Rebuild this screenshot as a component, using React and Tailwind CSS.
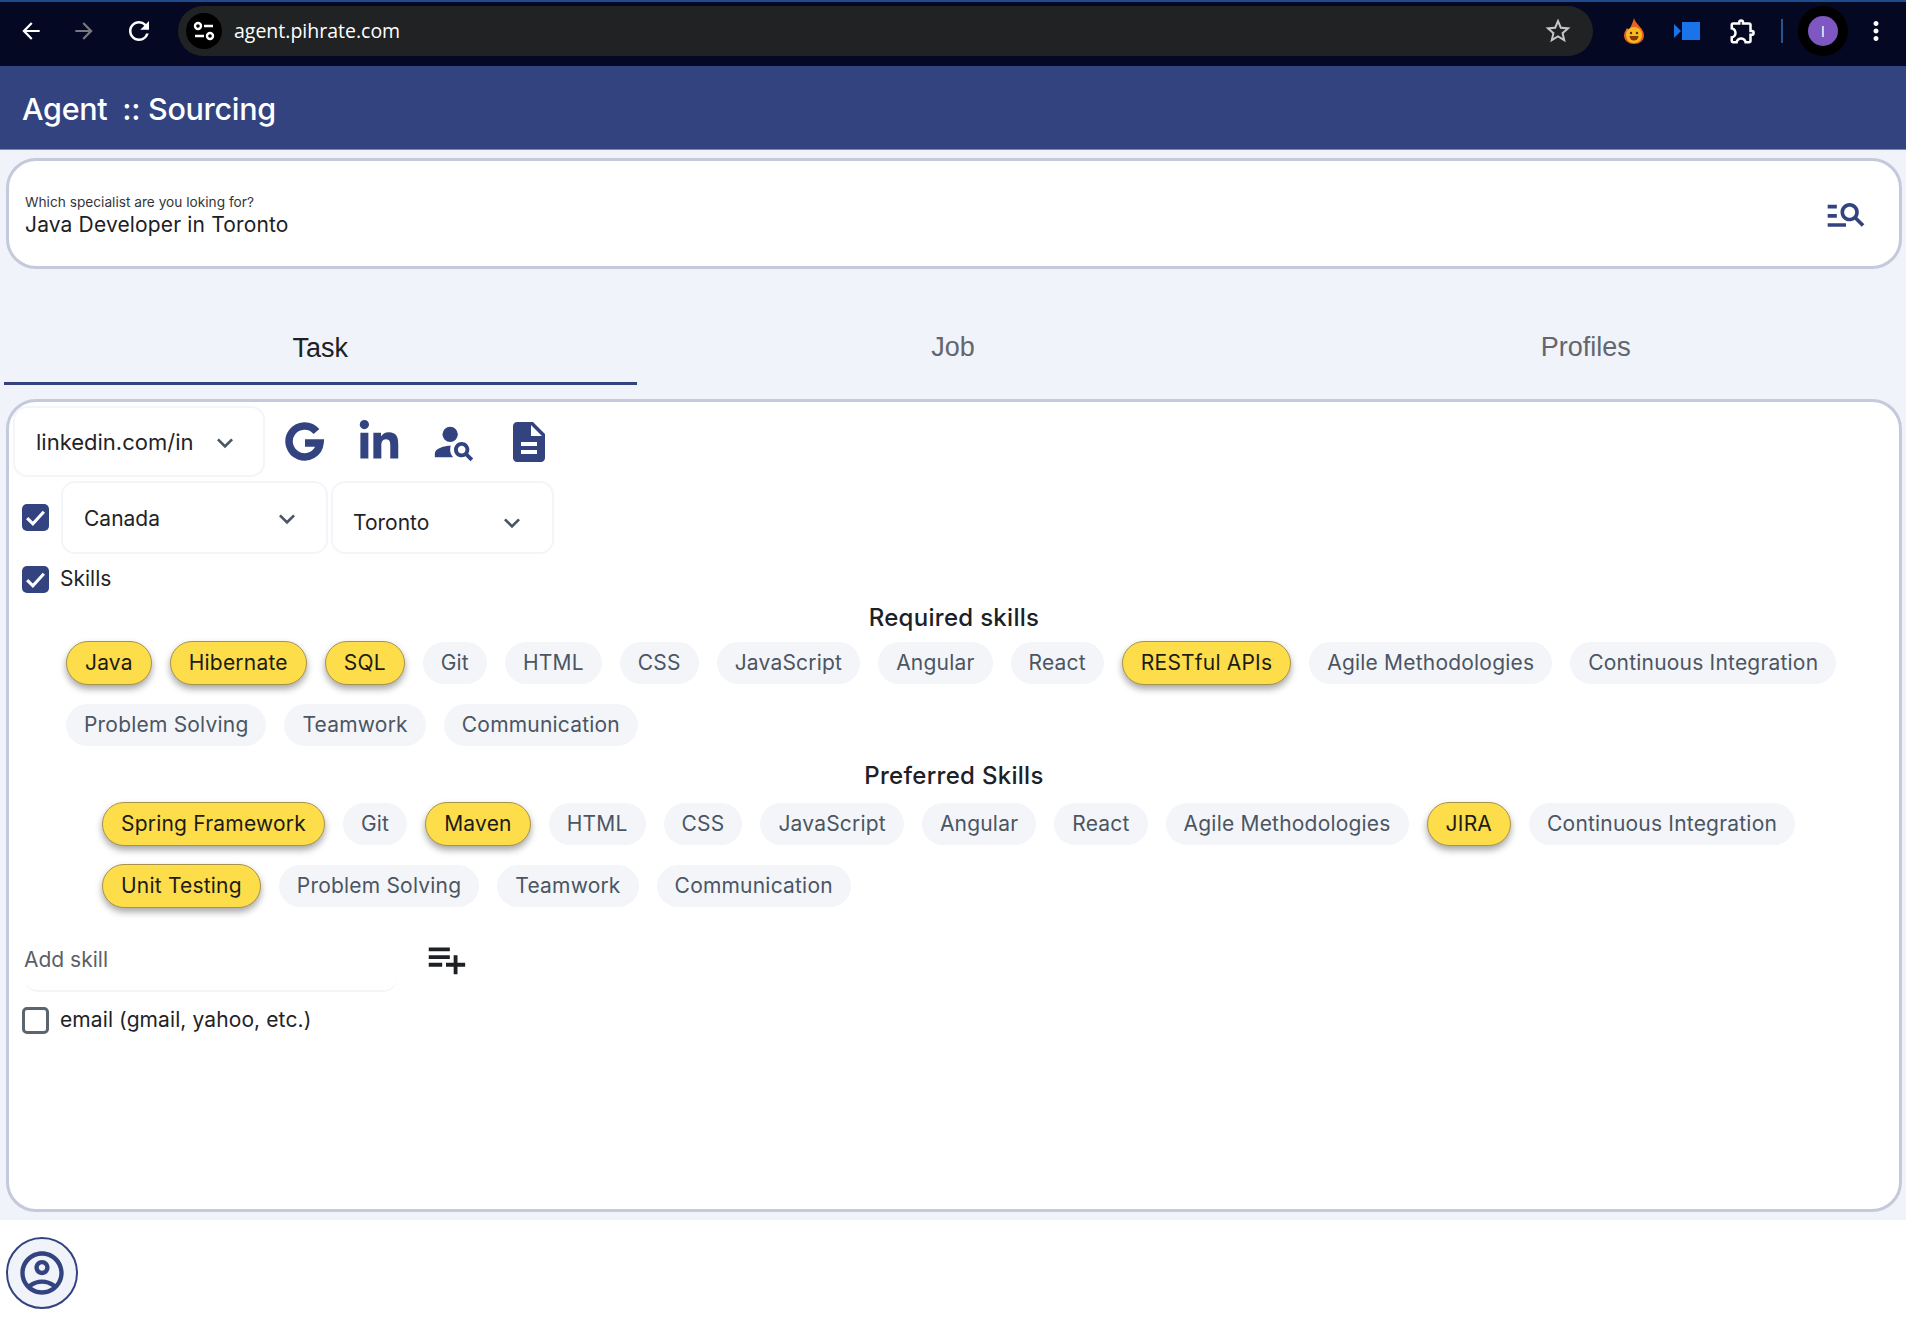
import React from "react";
import { FaLinkedinIn } from "react-icons/fa";
import {
  MdArrowBack,
  MdArrowForward,
  MdRefresh,
  MdStarBorder,
  MdOutlineExtension,
  MdManageSearch,
  MdPersonSearch,
  MdDescription,
  MdPlaylistAdd,
  MdOutlineAccountCircle,
  MdKeyboardArrowDown,
  MdMoreVert,
} from "react-icons/md";

const required = [
  ["Java", true], ["Hibernate", true], ["SQL", true], ["Git"], ["HTML"], ["CSS"], ["JavaScript"], ["Angular"], ["React"],
  ["RESTful APIs", true], ["Agile Methodologies"], ["Continuous Integration"], ["Problem Solving"], ["Teamwork"], ["Communication"],
];

const preferred = [
  ["Spring Framework", true], ["Git"], ["Maven", true], ["HTML"], ["CSS"], ["JavaScript"], ["Angular"], ["React"],
  ["Agile Methodologies"], ["JIRA", true], ["Continuous Integration"], ["Unit Testing", true], ["Problem Solving"], ["Teamwork"], ["Communication"],
];

function Chip({ label, active }) {
  return (
    <span
      className={
        active
          ? "h-[44px] px-[18px] flex items-center rounded-full bg-[#fedd4a] border border-[#a8934a] text-[#1d1b16] text-[21px] tracking-[0.2px] shadow-[0_4px_7px_rgba(0,0,0,0.35)]"
          : "h-[42px] my-px px-[18px] flex items-center rounded-full bg-[#f3f5f9] text-[#4b5563] text-[21px] tracking-[0.2px]"
      }
    >
      {label}
    </span>
  );
}

function Checkbox({ checked }) {
  return checked ? (
    <div className="ml-[9px] w-[27px] h-[27px] rounded-[5px] bg-[#334380] flex items-center justify-center">
      <svg width="25" height="25" viewBox="0 0 24 24" fill="none" stroke="#fff" strokeWidth="3">
        <path d="M4 12.5l5.5 5.5L20 6.5" />
      </svg>
    </div>
  ) : (
    <div className="ml-[9px] w-[27px] h-[27px] rounded-[5px] border-[3px] border-[#5b6570]" />
  );
}

function Select({ label, className }) {
  return (
    <div className={"flex items-center justify-between rounded-[14px] border-2 border-[#f3f5f9] " + className}>
      <span className="text-[#1f2328]">{label}</span>
      <MdKeyboardArrowDown className="text-[#4b5563]" size={32} />
    </div>
  );
}

function GoogleIcon() {
  return (
    <svg width="40" height="40" viewBox="0 0 40 40" fill="none" stroke="#334380" strokeWidth="7.5">
      <path d="M31.5 9.5A15.5 15.5 0 1 0 35 21H20" />
    </svg>
  );
}

function Flame() {
  return (
    <svg width="20" height="26" viewBox="0 0 20 26">
      <path d="M10 0c1 4 3 5 6 9 3 3 4 6 4 9a10 8 0 0 1-20 0c0-4 2-6 3-8 1 1 2 2 2 3 1-4 4-8 5-13z" fill="#e8641b" />
      <circle cx="10" cy="17" r="8" fill="#f7b924" />
      <circle cx="7" cy="15" r="1.2" fill="#5a3000" />
      <circle cx="13" cy="15" r="1.2" fill="#5a3000" />
      <path d="M5.5 18a4.5 4.5 0 0 0 9 0z" fill="#8a3a00" />
    </svg>
  );
}

function TuneIcon() {
  return (
    <svg width="22" height="20" viewBox="0 0 22 20" fill="none" stroke="#fff" strokeWidth="2.4">
      <circle cx="5" cy="5" r="3" />
      <path d="M11 5h9M2 15h9" />
      <circle cx="17" cy="15" r="3" />
    </svg>
  );
}

export default function App() {
  return (
    <div className="w-[1906px] h-[1323px] overflow-hidden bg-white font-['Inter',sans-serif]">
      {/* browser toolbar */}
      <div className="h-[66px] bg-[#050823] border-t-2 border-[#1f4a8c] flex items-center text-white">
        <div className="w-[178px] flex items-center pl-[18px] gap-[27px] -mt-[6px]">
          <MdArrowBack size={26} />
          <MdArrowForward size={26} className="text-[#77797f]" />
          <MdRefresh size={30} />
        </div>
        <div className="w-[1415px] h-[50px] -mt-[6px] rounded-full bg-[#202224] flex items-center pl-[8px] pr-[20px]">
          <div className="w-[36px] h-[36px] rounded-full bg-black flex items-center justify-center">
            <TuneIcon />
          </div>
          <span className="ml-[12px] text-[19.5px] font-['Open_Sans',sans-serif]">agent.pihrate.com</span>
          <MdStarBorder size={30} className="ml-auto text-[#c4c7c5]" />
        </div>
        <div className="flex-1 flex items-center -mt-[6px] pl-[31px]">
          <Flame />
          <svg width="26" height="18" viewBox="0 0 26 18" className="ml-[30px]">
            <path d="M0 2l7 7-7 7z" fill="#1a73e8" />
            <rect x="8" y="0" width="18" height="18" fill="#1a73e8" />
          </svg>
          <MdOutlineExtension size={30} className="ml-[28px]" />
          <div className="ml-[23px] w-[2px] h-[24px] bg-[#2a5490]" />
          <div className="ml-[15px] w-[50px] h-[50px] rounded-full bg-black flex items-center justify-center">
            <div className="w-[30px] h-[30px] rounded-full bg-[#7e57c2] flex items-center justify-center text-[14px]">I</div>
          </div>
          <MdMoreVert size={30} className="ml-[13px]" />
        </div>
      </div>

      {/* app header */}
      <div className="h-[84px] bg-[#334380] border-b border-[#8088a8] flex items-center pl-[22px]">
        <h1 className="mt-[3px] text-white text-[30.5px] font-medium tracking-[-0.3px]">
          Agent <span className="ml-[7px]">:: Sourcing</span>
        </h1>
      </div>

      <div className="h-[1070px] bg-[#f0f3fa] pt-[8px] pl-[6px] pr-[4px]">
        {/* search */}
        <div className="h-[111px] bg-white border-[3px] border-[#c4c9dc] rounded-[30px] flex items-center justify-between pl-[16px] pr-[31px]">
          <div className="flex flex-col mt-[5px]">
            <span className="text-[13.7px] leading-[16px] text-[#33363b]">Which specialist are you loking for?</span>
            <span className="text-[21px] leading-[29px] text-[#1d2024] tracking-[0.15px]">Java Developer in Toronto</span>
          </div>
          <MdManageSearch size={44} className="text-[#334380]" />
        </div>

        {/* tabs */}
        <div className="mt-[41px] -ml-[2px] h-[75px] flex font-['Liberation_Sans',sans-serif] text-[27px]">
          <div className="flex-1 pt-[5px] flex items-center justify-center border-b-[3px] border-[#334380] text-[#1d2024]">Task</div>
          <div className="flex-1 flex items-center justify-center text-[#63666c]">Job</div>
          <div className="flex-1 flex items-center justify-center text-[#63666c]">Profiles</div>
        </div>

        {/* task panel */}
        <div className="mt-[14px] h-[813px] bg-white border-[3px] border-[#c4c9dc] rounded-[30px] pt-[4px] px-[4px] text-[21px]">
          <div className="flex items-center">
            <Select label="linkedin.com/in" className="w-[252px] h-[71px] pt-[2px] pl-[21px] pr-[22px] text-[22px]" />
            <div className="ml-[20px] w-[40px] flex justify-center"><GoogleIcon /></div>
            <FaLinkedinIn size={44} className="ml-[32px] text-[#334380]" />
            <MdPersonSearch size={46} className="ml-[30px] text-[#334380]" />
            <MdDescription size={48} className="ml-[28px] text-[#334380]" />
          </div>

          <div className="flex items-center mt-[4px]">
            <Checkbox checked />
            <Select label="Canada" className="ml-[12px] w-[267px] h-[73px] pt-[2px] pl-[21px] pr-[23px]" />
            <Select label="Toronto" className="ml-[3px] w-[223px] h-[73px] pt-[10px] pl-[20px] pr-[24px]" />
          </div>

          <div className="flex items-center mt-[7px] h-[36px]">
            <Checkbox checked />
            <span className="ml-[11px] text-[#1f2328]">Skills</span>
          </div>

          <h2 className="mt-[6px] text-center text-[24px] tracking-[0.3px] leading-[30px] font-medium text-[#1d2024]">Required skills</h2>
          <div className="mt-[8px] pl-[53px] pr-[40px] flex flex-wrap gap-x-[18px] gap-y-[18px]">
            {required.map(([label, active]) => (
              <Chip key={label} label={label} active={active} />
            ))}
          </div>

          <h2 className="mt-[14px] text-center text-[24px] tracking-[0.3px] leading-[30px] font-medium text-[#1d2024]">Preferred Skills</h2>
          <div className="mt-[11px] pl-[89px] pr-[40px] flex flex-wrap gap-x-[18px] gap-y-[18px]">
            {preferred.map(([label, active]) => (
              <Chip key={label} label={label} active={active} />
            ))}
          </div>

          <div className="mt-[30px] flex items-start">
            <div className="ml-[11px] w-[373px] h-[54px] pt-[6px] border-b-2 border-[#f3f5f9] rounded-b-[14px] text-[#5b6068]">Add skill</div>
            <MdPlaylistAdd size={46} className="ml-[26px] -mt-[2px] text-[#1d2024]" />
          </div>

          <div className="flex items-center mt-[10px] h-[36px]">
            <Checkbox />
            <span className="ml-[11px] text-[#1f2328] tracking-[0.1px]">email (gmail, yahoo, etc.)</span>
          </div>
        </div>
      </div>

      {/* footer */}
      <div className="pt-[17px] pl-[6px]">
        <div className="w-[72px] h-[72px] rounded-full bg-[#f0f3fa] border-2 border-[#334380] flex items-center justify-center">
          <MdOutlineAccountCircle size={52} className="text-[#334380]" />
        </div>
      </div>
    </div>
  );
}
